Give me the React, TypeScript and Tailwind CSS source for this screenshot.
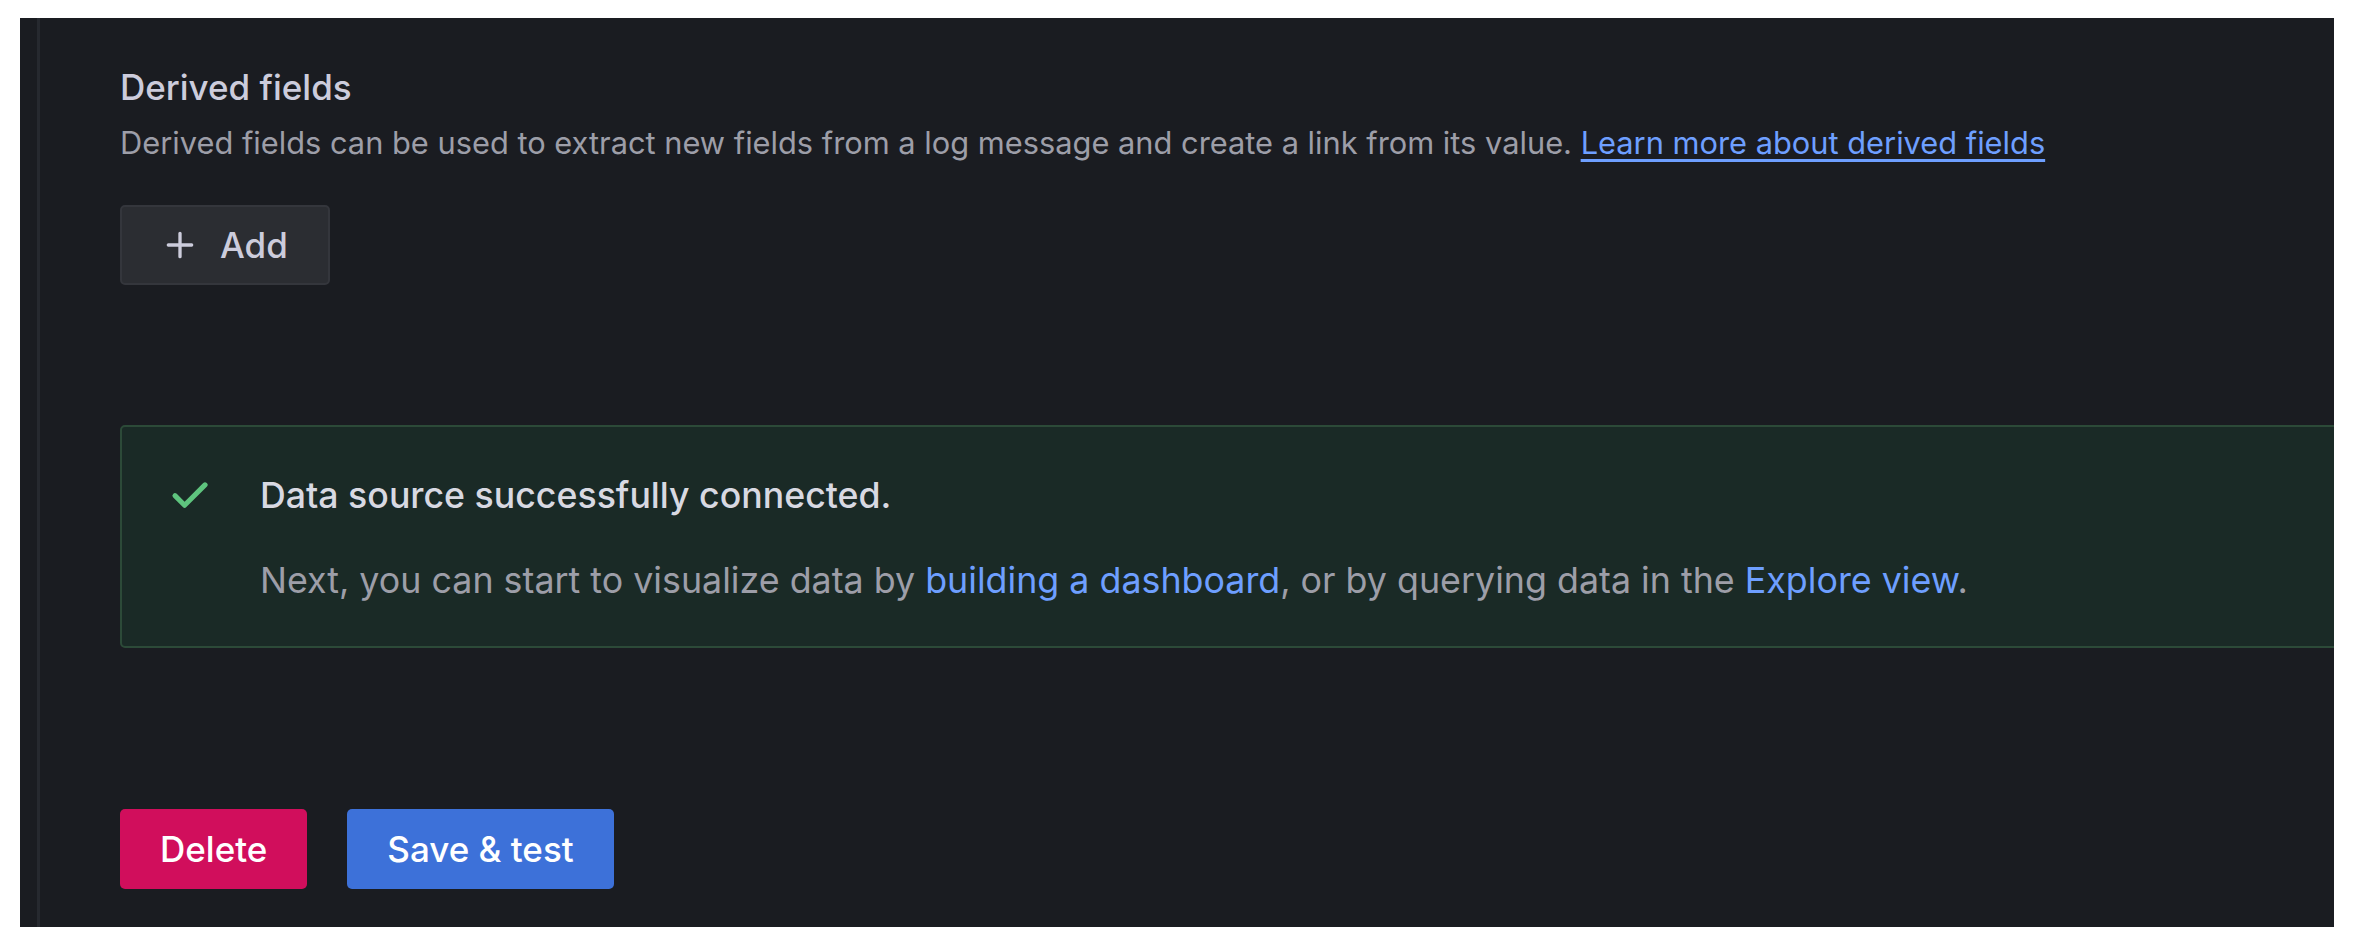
export default function App() {
  return (
    <div className="w-[2354px] h-[950px] bg-white pt-[18px] pl-[20px] font-['Inter','Noto_Sans',sans-serif]">
      <div className="w-[2314px] h-[909px] bg-[#1a1c21] pl-[17px] flex overflow-hidden">
        <div className="border-l-[3px] border-[#26292f] pl-[80px] pt-[44px] flex-1 flex flex-col items-start">
          <h3 className="text-[35px] leading-[50px] font-medium text-[#ccccdc]">Derived fields</h3>
          <p className="mt-[8px] text-[30.8px] leading-[45px] text-[#9d9ea8]">
            Derived fields can be used to extract new fields from a log message and create a link from its value.{' '}
            <a href="#" className="text-[#6e9fff] underline underline-offset-[5px]">
              Learn more about derived fields
            </a>
          </p>

          <button className="mt-[40px] h-[80px] flex items-center gap-[20px] rounded-[5px] border-[2px] border-[#34363c] bg-[#2b2d32] pl-[38px] pr-[40px] text-[35px] font-medium text-[#ccccdc]">
            <svg viewBox="0 0 24 24" className="w-[40px] h-[40px]" fill="currentColor">
              <path d="M19,11H13V5a1,1,0,0,0-2,0v6H5a1,1,0,0,0,0,2h6v6a1,1,0,0,0,2,0V13h6a1,1,0,0,0,0-2Z" />
            </svg>
            Add
          </button>

          <div className="mt-[140px] w-[2400px] h-[223px] shrink-0 rounded-[5px] border-[2px] border-[#2c4a38] bg-[#1a2a26] pl-[38px] pt-[38px] flex gap-[40px]">
            <svg viewBox="0 0 24 24" className="w-[60px] h-[60px] shrink-0 text-[#5ec47e]" fill="currentColor">
              <path d="M18.71,7.21a1,1,0,0,0-1.42,0L9.84,14.67,6.71,11.53A1,1,0,1,0,5.29,13l3.84,3.84a1,1,0,0,0,1.42,0l8.16-8.16A1,1,0,0,0,18.71,7.21Z" />
            </svg>
            <div>
              <div className="text-[35.7px] leading-[60px] font-medium text-[#d8d9e2]">Data source successfully connected.</div>
              <div className="mt-[29px] text-[35.8px] leading-[52px] text-[#9d9ea8]">
                Next, you can start to visualize data by{' '}
                <a href="#" className="text-[#6e9fff]">building a dashboard</a>, or by querying data in the{' '}
                <a href="#" className="text-[#6e9fff]">Explore view</a>.
              </div>
            </div>
          </div>

          <div className="mt-[161px] flex gap-[40px]">
            <button className="h-[80px] rounded-[5px] bg-[#d10e5c] px-[40px] text-[35px] font-medium text-white">Delete</button>
            <button className="h-[80px] rounded-[5px] bg-[#3d71d9] px-[40px] text-[35px] font-medium text-white">Save &amp; test</button>
          </div>
        </div>
      </div>
    </div>
  );
}
